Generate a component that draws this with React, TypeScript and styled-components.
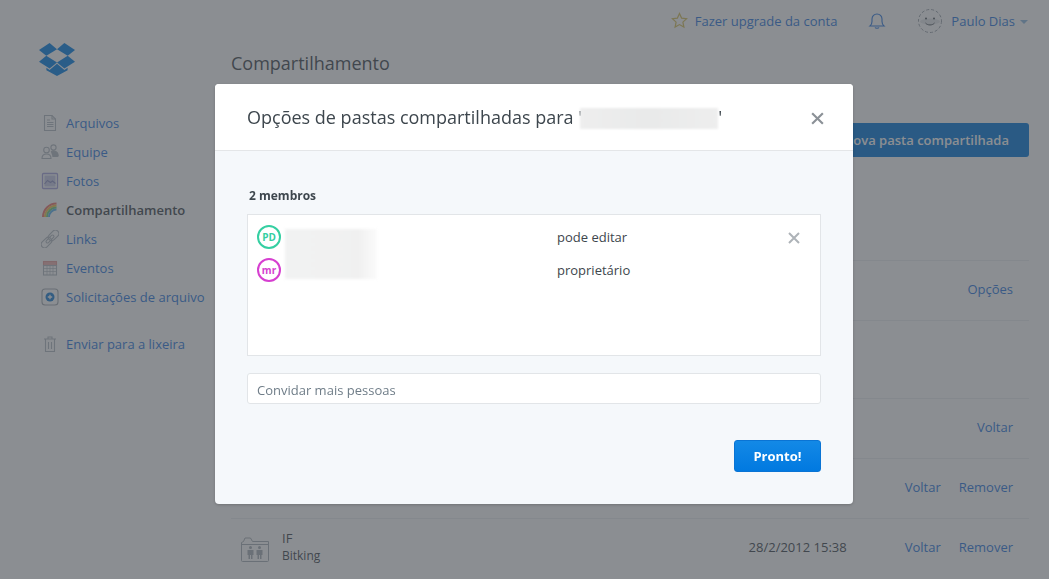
import React from 'react';
import styled, { createGlobalStyle } from 'styled-components';

const Global = createGlobalStyle`
  html, body {
    margin: 0;
    height: 100%;
    overflow: hidden;
    background: #fff;
    font-family: 'Open Sans', 'Liberation Sans', sans-serif;
    font-size: 13px;
    color: #3d464d;
  }
  * { box-sizing: border-box; }
`;

const Page = styled.div`
  display: flex;
  width: 1049px;
  height: 579px;
  overflow: hidden;
`;

const Sidebar = styled.aside`
  flex: 0 0 231px;
  padding: 43px 0 0 39px;
`;

const Logo = styled.svg`
  display: block;
  width: 36px;
  height: 33px;
  margin-bottom: 32px;
`;

const Nav = styled.nav`
  display: flex;
  flex-direction: column;
`;

const NavItem = styled.a<{ $active?: boolean; $spaced?: boolean }>`
  display: flex;
  align-items: center;
  height: 29px;
  margin-top: ${({ $spaced }) => ($spaced ? '18px' : '0')};
  color: ${({ $active }) => ($active ? '#3d464d' : '#2a78e0')};
  font-weight: ${({ $active }) => ($active ? 600 : 400)};
  white-space: nowrap;
`;

const NavIcon = styled.svg`
  flex: 0 0 18px;
  width: 18px;
  height: 18px;
  margin-left: 2px;
  margin-right: 7px;
  fill: none;
  stroke: #b4bbc2;
  stroke-width: 1.1;
`;

const Main = styled.main`
  flex: 1;
  padding-right: 20px;
`;

const TopBar = styled.header`
  display: flex;
  align-items: center;
  justify-content: flex-end;
  height: 43px;
  padding-bottom: 2px;
  color: #2a78e0;
`;

const TopLink = styled.a`
  display: flex;
  align-items: center;
  gap: 7px;
`;

const BellIcon = styled.svg`
  width: 18px;
  height: 18px;
  margin: 0 32px 0 31px;
  fill: none;
  stroke: #2a78e0;
  stroke-width: 1.1;
`;

const Avatar = styled.svg`
  width: 24px;
  height: 24px;
  margin-right: 9px;
  fill: none;
`;

const Caret = styled.span`
  width: 0;
  height: 0;
  margin: 2px 1px 0 5px;
  border-left: 4px solid transparent;
  border-right: 4px solid transparent;
  border-top: 4px solid #8fbbe2;
`;

const TitleRow = styled.div`
  height: 80px;
  padding-top: 8px;
  font-size: 18px;
  line-height: 25px;
`;

const ActionBar = styled.div`
  display: flex;
  justify-content: flex-end;
  height: 137px;
`;

const NewFolderButton = styled.button`
  height: 34px;
  padding: 0 20px;
  border: 0;
  border-radius: 3px;
  background: #0076d9;
  color: #fff;
  font: 600 13px 'Open Sans', 'Liberation Sans', sans-serif;
`;

const Row = styled.div<{ $height: number }>`
  display: flex;
  align-items: center;
  height: ${({ $height }) => $height}px;
  padding: 0 16px 4px 10px;
  border-top: 1px solid #eceff2;
`;

const FolderIcon = styled.svg`
  width: 28px;
  height: 26px;
  margin: 4px 13px 0 0;
  fill: none;
  stroke: #a9b0b7;
  stroke-width: 1;
`;

const FolderText = styled.div`
  flex: 1;
  line-height: 17px;
  font-size: 12px;
`;

const FolderName = styled.div`
  font-size: 13px;
`;

const RowDate = styled.span`
  margin-right: 40px;
`;

const RowAction = styled.a`
  margin-left: 18px;
  color: #2a78e0;
`;

const Spacer = styled.div`
  flex: 1;
`;

const Overlay = styled.div`
  position: fixed;
  inset: 0;
  padding: 84px 0 0 215px;
  background: rgba(68, 73, 79, 0.62);
`;

const Modal = styled.section`
  width: 638px;
  height: 420px;
  border-radius: 4px;
  overflow: hidden;
  background: #f5f8fb;
  box-shadow: 0 1px 3px rgba(0, 0, 0, 0.2);
`;

const ModalHeader = styled.header`
  display: flex;
  align-items: center;
  height: 67px;
  padding: 0 28px 0 32px;
  background: #fff;
  border-bottom: 1px solid #e4e6e8;
  font-size: 18px;
`;

const ModalTitle = styled.h2`
  display: flex;
  align-items: center;
  flex: 1;
  margin: 0;
  font-size: 18px;
  font-weight: 400;
  white-space: pre;
`;

const Redacted = styled.span`
  display: inline-block;
  width: 138px;
  height: 21px;
  margin: 2px 0 0 -2px;
  background: linear-gradient(90deg, #eeeeee, #e9eaea 50%, #eeeeee);
  filter: blur(1px);
`;

const CloseIcon = styled.svg<{ $size: number; $shade: string }>`
  width: ${({ $size }) => $size}px;
  height: ${({ $size }) => $size}px;
  stroke: ${({ $shade }) => $shade};
  stroke-width: 2;
`;

const HeaderClose = styled(CloseIcon)`
  margin-top: 3px;
`;

const RemoveMember = styled(CloseIcon)`
  margin-top: 2px;
`;

const ModalBody = styled.div`
  padding: 36px 32px 0;
`;

const MembersLabel = styled.div`
  margin: 0 0 9px 2px;
  font-size: 12px;
  line-height: 18px;
  font-weight: 700;
`;

const MemberList = styled.div`
  position: relative;
  display: flex;
  flex-direction: column;
  gap: 9px;
  height: 142px;
  padding: 10px 19px 0 9px;
  background: #fff;
  border: 1px solid #e2e5e8;
`;

const MemberRow = styled.div`
  display: grid;
  grid-template-columns: 300px 1fr 14px;
  align-items: center;
  height: 24px;
`;

const Initials = styled.span<{ $tone: string }>`
  display: flex;
  align-items: center;
  justify-content: center;
  width: 24px;
  height: 24px;
  border: 2px solid ${({ $tone }) => $tone};
  border-radius: 50%;
  color: ${({ $tone }) => $tone};
  font-size: 10px;
  font-weight: 700;
`;

const BlurredNames = styled.div`
  position: absolute;
  left: 37px;
  top: 14px;
  width: 92px;
  height: 50px;
  background: linear-gradient(90deg, #f1f2f2, #f0f0f0 80%, #fbfbfb);
  filter: blur(1.5px);
`;

const InviteInput = styled.input`
  display: block;
  width: 100%;
  height: 31px;
  margin-top: 17px;
  padding: 2px 9px 0;
  border: 1px solid #e2e5e8;
  border-radius: 3px;
  background: #fff;
  font: 13px 'Open Sans', 'Liberation Sans', sans-serif;
  &::placeholder {
    color: #6f7d88;
    opacity: 1;
  }
`;

const Footer = styled.footer`
  display: flex;
  justify-content: flex-end;
  margin-top: 36px;
`;

const DoneButton = styled.button`
  width: 87px;
  height: 32px;
  border: 1px solid #0a74d4;
  border-radius: 3px;
  background: linear-gradient(#1389e6, #0179e0);
  color: #fff;
  font: 700 13px 'Open Sans', 'Liberation Sans', sans-serif;
`;

const navItems = [
  {
    label: 'Arquivos',
    icon: (
      <>
        <path d="M3.5 1.5h7.5l3.5 3.5v11.5h-11z" />
        <path d="M6 6h3M6 8.5h6.5M6 10.5h6.5M6 12.5h6.5M11 1.5v3.5h3.5" />
      </>
    ),
  },
  {
    label: 'Equipe',
    icon: (
      <>
        <circle cx="5.5" cy="7" r="2.8" />
        <path d="M1 15.5c0-6 9-6 9 0z" />
        <circle cx="12.5" cy="4.5" r="2.6" />
        <path d="M10 9c2-2.2 7-1.2 7.2 3.5 0 .6-.4 1-1 1H11.5" fill="#b4bbc2" />
      </>
    ),
  },
  {
    label: 'Fotos',
    icon: (
      <>
        <rect x="1.5" y="1.5" width="15" height="15" rx="1" stroke="#a5a2de" strokeWidth="1.3" />
        <rect x="3.5" y="3.5" width="11" height="11" fill="#c8cbe8" stroke="none" />
        <path d="M3.5 12l3-3.5 3 2 2-1.5 3 2.5" stroke="#8f93c4" />
      </>
    ),
  },
  {
    label: 'Compartilhamento',
    active: true,
    icon: (
      <g strokeWidth="2" transform="translate(0 1)">
        <path d="M2 15A13.5 13.5 0 0 1 15.5 1.5" stroke="#f0736c" />
        <path d="M4 15A11.5 11.5 0 0 1 15.5 3.5" stroke="#f5c04d" />
        <path d="M6 15A9.5 9.5 0 0 1 15.5 5.5" stroke="#6fcf7c" />
        <path d="M8 15A7.5 7.5 0 0 1 15.5 7.5" stroke="#5bb4ef" />
      </g>
    ),
  },
  {
    label: 'Links',
    icon: (
      <g transform="rotate(-45 9 9)">
        <rect x="-2" y="5.6" width="12" height="6.8" rx="3.4" />
        <rect x="8" y="5.6" width="12" height="6.8" rx="3.4" />
        <rect x="4" y="7.6" width="10" height="2.8" rx="1.4" />
      </g>
    ),
  },
  {
    label: 'Eventos',
    icon: (
      <>
        <rect x="2.5" y="2.5" width="13" height="4" fill="#efb1ae" stroke="#e59c98" />
        <rect x="2.5" y="6.5" width="13" height="9.5" />
        <path d="M2.5 9.5h13M2.5 12.5h13M6 6.5v9.5M9 6.5v9.5M12 6.5v9.5" strokeWidth="0.7" />
      </>
    ),
  },
  {
    label: 'Solicitações de arquivo',
    icon: (
      <>
        <rect x="1" y="1" width="16" height="16" rx="3" stroke="#a5acb3" />
        <circle cx="9" cy="9" r="4.5" fill="#1a7fd6" stroke="none" />
        <path d="M9 6.8v4.4M6.8 9h4.4" stroke="#fff" strokeWidth="1.3" />
      </>
    ),
  },
  {
    label: 'Enviar para a lixeira',
    spaced: true,
    icon: (
      <>
        <path d="M3 4h12M7 4V2h4v2M4.5 4v12.5h9V4M7.5 7v7M10.5 7v7" />
      </>
    ),
  },
];

const members = [
  { initials: 'PD', tone: '#35cfa2', role: 'pode editar', removable: true },
  { initials: 'mr', tone: '#d63fd0', role: 'proprietário', removable: false },
];

const CrossLines = () => <path d="M2 2l10 10M12 2L2 12" fill="none" />;

export default function App() {
  return (
    <>
      <Global />
      <Page>
        <Sidebar>
          <Logo viewBox="0 0 36 33" aria-label="Dropbox">
            <g fill="#007ee5">
              <path d="M10.6 0L0 6.9l7.3 5.9L18 6.2z" />
              <path d="M25.4 0L36 6.9l-7.3 5.9L18 6.2z" />
              <path d="M7.3 12.8L0 18.7l10.6 6.9L18 19.4z" />
              <path d="M28.7 12.8L36 18.7l-10.6 6.9L18 19.4z" />
              <path d="M18 20.8l-7.4 6.1-3.2-2.1v2.4L18 33l10.6-5.8v-2.4l-3.2 2.1z" />
            </g>
          </Logo>
          <Nav>
            {navItems.map((item) => (
              <NavItem key={item.label} $active={item.active} $spaced={item.spaced}>
                <NavIcon viewBox="0 0 18 18">{item.icon}</NavIcon>
                {item.label}
              </NavItem>
            ))}
          </Nav>
        </Sidebar>
        <Main>
          <TopBar>
            <TopLink>
              <svg width="17" height="17" viewBox="0 0 17 17" fill="none" stroke="#d8c25c" strokeWidth="1.2">
                <path d="M8.5 1.5l2.1 4.6 5 .6-3.7 3.4 1 5-4.4-2.5-4.4 2.5 1-5L1.4 6.7l5-.6z" />
              </svg>
              Fazer upgrade da conta
            </TopLink>
            <BellIcon viewBox="0 0 18 18">
              <path d="M2 14c1.5-1.2 2-2.5 2-4.5V7a5 5 0 0 1 10 0v2.5c0 2 .5 3.3 2 4.5z" />
              <path d="M7 15.5c.6 1 3.4 1 4 0" />
            </BellIcon>
            <Avatar viewBox="0 0 24 24">
              <circle cx="12" cy="12" r="11.5" stroke="#9aa2aa" strokeDasharray="3 2" />
              <ellipse cx="12" cy="12.5" rx="10" ry="3" fill="#e8eaec" />
              <circle cx="8" cy="9.5" r="1" fill="#50585f" />
              <circle cx="16" cy="9.5" r="1" fill="#50585f" />
              <path d="M7.5 14c2 2.6 7 2.6 9 0" stroke="#50585f" strokeWidth="1" />
            </Avatar>
            Paulo Dias
            <Caret />
          </TopBar>
          <TitleRow>Compartilhamento</TitleRow>
          <ActionBar>
            <NewFolderButton>Nova pasta compartilhada</NewFolderButton>
          </ActionBar>
          <Row $height={60}>
            <Spacer />
            <RowAction>Opções</RowAction>
          </Row>
          <Row $height={78} />
          <Row $height={60}>
            <Spacer />
            <RowAction>Voltar</RowAction>
          </Row>
          <Row $height={60}>
            <Spacer />
            <RowAction>Voltar</RowAction>
            <RowAction>Remover</RowAction>
          </Row>
          <Row $height={60}>
            <FolderIcon viewBox="0 0 28 26">
              <path d="M.5 6.5V24.5a1 1 0 0 0 1 1h25a1 1 0 0 0 1-1V5.5h-16l-2-3.5H4L2.5 5.5z" />
              <path d="M.5 8.5h27" />
              <g fill="#a9b0b7" stroke="none">
                <circle cx="9.5" cy="11.5" r="1.5" />
                <path d="M6.5 14h6v5h-1v4h-1.5v-4h-1v4H7.5v-4h-1z" />
                <circle cx="18.5" cy="11.5" r="1.5" />
                <path d="M15.5 14h6v5h-1v4h-1.5v-4h-1v4h-1.5v-4h-1z" />
              </g>
            </FolderIcon>
            <FolderText>
              <FolderName>IF</FolderName>
              Bitking
            </FolderText>
            <RowDate>28/2/2012 15:38</RowDate>
            <RowAction>Voltar</RowAction>
            <RowAction>Remover</RowAction>
          </Row>
        </Main>
      </Page>
      <Overlay>
        <Modal>
          <ModalHeader>
            <ModalTitle>
              Opções de pastas compartilhadas para '<Redacted />'
            </ModalTitle>
            <HeaderClose $size={15} $shade="#8b9197" viewBox="0 0 14 14">
              <CrossLines />
            </HeaderClose>
          </ModalHeader>
          <ModalBody>
            <MembersLabel>2 membros</MembersLabel>
            <MemberList>
              {members.map((member) => (
                <MemberRow key={member.initials}>
                  <Initials $tone={member.tone}>{member.initials}</Initials>
                  <span>{member.role}</span>
                  {member.removable && (
                    <RemoveMember $size={14} $shade="#aeb3b8" viewBox="0 0 14 14">
                      <CrossLines />
                    </RemoveMember>
                  )}
                </MemberRow>
              ))}
              <BlurredNames />
            </MemberList>
            <InviteInput placeholder="Convidar mais pessoas" />
            <Footer>
              <DoneButton>Pronto!</DoneButton>
            </Footer>
          </ModalBody>
        </Modal>
      </Overlay>
    </>
  );
}
